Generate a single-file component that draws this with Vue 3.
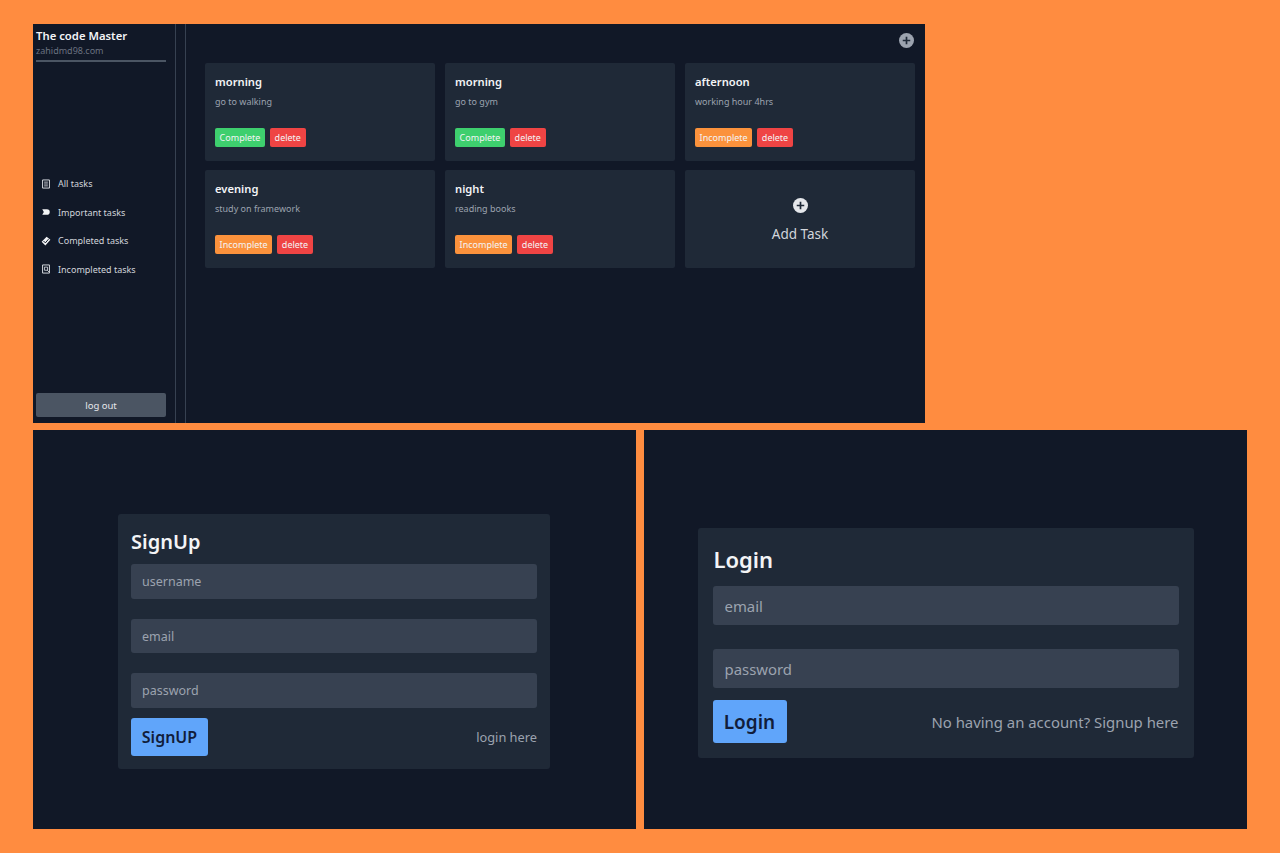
<template>
  <div class="page">
    <section class="window dashboard">
      <aside class="sidebar">
        <div class="profile">
          <h1>The code Master</h1>
          <p>zahidmd98.com</p>
        </div>
        <nav class="nav">
          <a v-for="item in navItems" :key="item.label" class="nav-item">
            <svg viewBox="0 0 16 16" class="nav-icon" v-html="item.icon"></svg>
            <span>{{ item.label }}</span>
          </a>
        </nav>
        <button class="logout">log out</button>
      </aside>

      <main class="main">
        <div class="toolbar">
          <svg viewBox="0 0 16 16" class="plus plus-top">
            <circle cx="8" cy="8" r="8" fill="#9ca3af" />
            <path d="M8 4v8M4 8h8" stroke="#1f2937" stroke-width="1.8" />
          </svg>
        </div>
        <div class="grid">
          <div v-for="task in tasks" :key="task.desc" class="card">
            <h3>{{ task.title }}</h3>
            <p>{{ task.desc }}</p>
            <div class="actions">
              <button class="tag" :class="task.done ? 'tag-green' : 'tag-orange'">
                {{ task.done ? 'Complete' : 'Incomplete' }}
              </button>
              <button class="tag tag-red">delete</button>
            </div>
          </div>
          <div class="card add-card">
            <svg viewBox="0 0 16 16" class="plus">
              <circle cx="8" cy="8" r="8" fill="#e5e7eb" />
              <path d="M8 4v8M4 8h8" stroke="#1f2937" stroke-width="1.8" />
            </svg>
            <span>Add Task</span>
          </div>
        </div>
      </main>
    </section>

    <div class="bottom">
      <section class="window auth auth-signup">
        <form class="form signup" @submit.prevent>
          <h2>SignUp</h2>
          <input placeholder="username" />
          <input placeholder="email" />
          <input placeholder="password" />
          <div class="form-foot">
            <button class="submit">SignUP</button>
            <a>login here</a>
          </div>
        </form>
      </section>

      <section class="window auth auth-login">
        <form class="form login" @submit.prevent>
          <h2>Login</h2>
          <input placeholder="email" />
          <input placeholder="password" />
          <div class="form-foot">
            <button class="submit">Login</button>
            <a>No having an account? Signup here</a>
          </div>
        </form>
      </section>
    </div>
  </div>
</template>

<script setup>
const navItems = [
  {
    label: 'All tasks',
    icon: '<path fill="none" stroke="#d1d5db" stroke-width="1.6" d="M2.5 1.5h11v13h-11z"/><path stroke="#d1d5db" stroke-width="1.4" d="M5 5h6M5 8h6M5 11h6"/>',
  },
  {
    label: 'Important tasks',
    icon: '<path fill="#f3f4f6" d="M2 3.5h7.5a4.5 4.5 0 0 1 0 9H2l2.5-4.5z"/>',
  },
  {
    label: 'Completed tasks',
    icon: '<path fill="#f3f4f6" d="M9 1l6 5-8 9-6-6z"/><path fill="none" stroke="#111827" stroke-width="1.6" d="M4 8l3 3 5-6"/>',
  },
  {
    label: 'Incompleted tasks',
    icon: '<path fill="none" stroke="#d1d5db" stroke-width="1.6" d="M2.5 1.5h11v13h-11z"/><path fill="none" stroke="#d1d5db" stroke-width="1.4" d="M5.5 5h5v5h-5zM10 10l3 3"/>',
  },
]

const tasks = [
  { title: 'morning', desc: 'go to walking', done: true },
  { title: 'morning', desc: 'go to gym', done: true },
  { title: 'afternoon', desc: 'working hour 4hrs', done: false },
  { title: 'evening', desc: 'study on framework', done: false },
  { title: 'night', desc: 'reading books', done: false },
]
</script>

<style>
html, body {
  margin: 0;
  background: #ff8c40;
}
</style>

<style scoped>
* {
  box-sizing: border-box;
}

.page {
  width: 1280px;
  height: 853px;
  padding: 24px 33px 0;
  background: #ff8c40;
  font-family: "Noto Sans", "Open Sans", sans-serif;
  overflow: hidden;
}

.window {
  background: #111827;
}

.dashboard {
  width: 892px;
  height: 399px;
  display: flex;
}

.sidebar {
  width: 144px;
  padding: 3px 9px 6px 3px;
  border-right: 1px solid #374151;
  display: flex;
  flex-direction: column;
}

.profile {
  border-bottom: 2px solid #4b5563;
  height: 35px;
}

.profile h1 {
  margin: 0;
  font-size: 11.3px;
  line-height: 17px;
  font-weight: 600;
  color: #f3f4f6;
}

.profile p {
  margin: 0;
  font-size: 9px;
  line-height: 13px;
  color: #6b7280;
}

.nav {
  margin-top: 114.5px;
  display: flex;
  flex-direction: column;
  gap: 14.6px;
}

.nav-item {
  height: 14px;
  padding-left: 5px;
  display: flex;
  align-items: center;
  gap: 7px;
  font-size: 9px;
  color: #d1d5db;
}

.nav-icon {
  width: 10px;
  height: 10px;
  flex: none;
}

.logout {
  margin-top: auto;
  height: 24px;
  border: none;
  border-radius: 2px;
  background: #4b5563;
  color: #e5e7eb;
  font: inherit;
  font-size: 9.5px;
}

.main {
  flex: 1;
  margin-left: 9px;
  padding: 0 10px 0 19px;
  border-left: 1px solid #374151;
}

.toolbar {
  height: 39px;
  padding-top: 9px;
  display: flex;
  justify-content: flex-end;
  margin-right: 1px;
}

.plus {
  width: 15px;
  height: 15px;
}

.grid {
  display: grid;
  grid-template-columns: repeat(3, 230px);
  grid-auto-rows: 98px;
  column-gap: 10px;
  row-gap: 9px;
}

.card {
  background: #1f2937;
  border-radius: 2px;
  padding: 10px 10px 0;
}

.card h3 {
  margin: 0;
  font-size: 11.2px;
  line-height: 17px;
  font-weight: 600;
  color: #f3f4f6;
}

.card p {
  margin: 5px 0 0;
  font-size: 9px;
  line-height: 14px;
  color: #9ca3af;
}

.actions {
  margin-top: 19px;
  display: flex;
  gap: 5px;
}

.tag {
  height: 19px;
  padding: 0 4.6px;
  border: none;
  border-radius: 2px;
  font: inherit;
  font-size: 9px;
  line-height: 19px;
  color: #f3f4f6;
}

.tag-green { background: #3ecf6e; }
.tag-orange { background: #fb923c; }
.tag-red { background: #ef4444; }

.add-card {
  padding: 2px 0 0;
  display: flex;
  flex-direction: column;
  align-items: center;
  justify-content: center;
  gap: 12px;
  font-size: 13.5px;
  color: #d1d5db;
}

.bottom {
  margin-top: 7px;
  display: flex;
  gap: 8px;
}

.auth {
  width: 603px;
  height: 399px;
  display: flex;
  justify-content: center;
  align-items: flex-start;
}

.auth-signup { padding: 84px 1px 0 0; }
.auth-login { padding-top: 98px; }

.form {
  background: #1f2937;
  border-radius: 3px;
  display: flex;
  flex-direction: column;
}

.form h2 {
  margin: 0;
  font-weight: 600;
  color: #f3f4f6;
}

.form input {
  display: block;
  width: 100%;
  border: none;
  outline: none;
  border-radius: 3px;
  background: #374151;
  font: inherit;
  color: #e5e7eb;
}

.form input::placeholder {
  color: #9ca3af;
}

.form-foot {
  display: flex;
  justify-content: space-between;
  align-items: center;
  color: #9ca3af;
}

.submit {
  border: none;
  border-radius: 3px;
  background: #60a5fa;
  color: #111d3a;
  font: inherit;
  font-weight: 600;
}

.signup {
  width: 432px;
  height: 255px;
  padding: 13px 13px 0;
  font-size: 12.8px;
}

.signup h2 {
  font-size: 20px;
  line-height: 30px;
  margin-bottom: 7px;
}

.signup input {
  height: 34.5px;
  padding: 1px 11px 0;
  margin-bottom: 20px;
  font-size: 12.5px;
}

.signup input:nth-of-type(3) {
  margin-bottom: 10px;
}

.signup .submit {
  width: 77px;
  height: 38px;
  font-size: 16px;
}

.login {
  width: 496px;
  height: 230px;
  padding: 16px 15px 0;
  font-size: 14.9px;
}

.login h2 {
  font-size: 22px;
  line-height: 30px;
  margin-bottom: 12px;
  padding-left: 1px;
}

.login input {
  height: 39px;
  padding: 0 12px;
  margin-bottom: 24px;
}

.login input:nth-of-type(2) {
  margin-bottom: 12px;
}

.login .submit {
  width: 74px;
  height: 43px;
  font-size: 19px;
}
</style>
